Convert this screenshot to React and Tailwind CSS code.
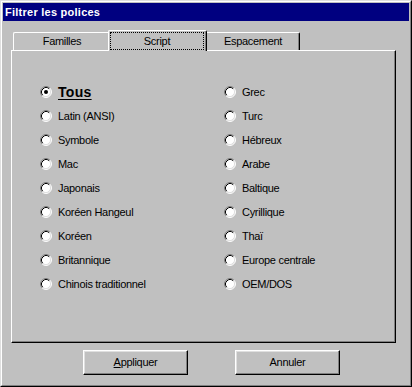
import React from "react";

function Radio({ checked }) {
  return (
    <svg width="12" height="12" viewBox="0 0 12 12" className="shrink-0">
      <circle cx="6" cy="6" r="5" fill="#ffffff" />
      <path d="M2.11 9.89 A5.5 5.5 0 0 1 9.89 2.11" fill="none" stroke="#808080" strokeWidth="1" />
      <path d="M9.89 2.11 A5.5 5.5 0 0 1 2.11 9.89" fill="none" stroke="#ffffff" strokeWidth="1" />
      <path d="M2.82 9.18 A4.5 4.5 0 0 1 9.18 2.82" fill="none" stroke="#000000" strokeWidth="1" />
      <path d="M9.18 2.82 A4.5 4.5 0 0 1 2.82 9.18" fill="none" stroke="#dfdfdf" strokeWidth="1" />
      {checked && <circle cx="6" cy="6" r="2" fill="#000000" />}
    </svg>
  );
}

const left = [
  "Latin (ANSI)",
  "Symbole",
  "Mac",
  "Japonais",
  "Koréen Hangeul",
  "Koréen",
  "Britannique",
  "Chinois traditionnel",
];
const right = [
  "Grec",
  "Turc",
  "Hébreux",
  "Arabe",
  "Baltique",
  "Cyrillique",
  "Thaï",
  "Europe centrale",
  "OEM/DOS",
];

function Row({ label, checked, bold }) {
  return (
    <div className="flex h-[24px] items-center">
      <Radio checked={checked} />
      {bold ? (
        <span className="ml-[6px] text-[14px] font-bold underline underline-offset-2 tracking-[0.3px]">{label}</span>
      ) : (
        <span className="ml-[6px] text-[11px] tracking-[-0.3px]">{label}</span>
      )}
    </div>
  );
}

export default function App() {
  return (
    <div className="w-[412px] h-[387px] bg-[#c0c0c0] border border-t-[#dfdfdf] border-l-[#dfdfdf] border-r-black border-b-black font-['Liberation_Sans',Arial,sans-serif] text-black">
      <div className="w-full h-full border border-t-white border-l-white border-r-[#808080] border-b-[#808080] p-[1px] flex flex-col">
        <div className="h-[18px] bg-[#000080] flex items-center pl-[2px] text-white text-[11px] font-bold tracking-[0.25px]">
          Filtrer les polices
        </div>

        <div className="mt-[9px] ml-[10px] h-[20px] flex items-end">
          <div className="w-[97px] h-[18px] border-t border-l border-white rounded-tl-[2px] rounded-tr-[2px] flex items-center justify-center text-[11px] tracking-[-0.3px]">
            Familles
          </div>
          <div className="relative z-10 -ml-[2px] -mb-[1px] w-[99px] h-[21px] bg-[#c0c0c0] border-t border-l border-white border-r border-r-black rounded-tl-[2px] rounded-tr-[2px] shadow-[inset_-1px_0_#808080] pt-[1px] pl-[1px] pr-[2px] pb-[1px] flex">
            <div className="flex-1 border border-dotted border-black flex items-center justify-center text-[11px] tracking-[-0.3px]">
              Script
            </div>
          </div>
          <div className="-ml-[2px] w-[95px] h-[18px] border-t border-white border-r border-r-black rounded-tr-[2px] shadow-[inset_-1px_0_#808080] flex items-center justify-center pl-[2px] text-[11px] tracking-[-0.3px]">
            Espacement
          </div>
        </div>

        <div className="ml-[8px] w-[385px] h-[293px] border border-t-white border-l-white border-r-black border-b-black shadow-[inset_-1px_-1px_#808080] pt-[29px] pl-[28px] flex">
          <div className="w-[184px] flex flex-col">
            <Row label="Tous" checked bold />
            {left.map((l) => (
              <Row key={l} label={l} />
            ))}
          </div>
          <div className="flex flex-col">
            {right.map((l) => (
              <Row key={l} label={l} />
            ))}
          </div>
        </div>

        <div className="mt-[7px] ml-[80px] flex gap-[47px]">
          <button className="w-[105px] h-[25px] bg-[#c0c0c0] border border-t-white border-l-white border-r-black border-b-black shadow-[inset_-1px_-1px_#808080,inset_1px_1px_#dfdfdf] text-[11px] tracking-[-0.3px] flex items-center justify-center">
            <span><span className="underline">A</span>ppliquer</span>
          </button>
          <button className="w-[105px] h-[25px] bg-[#c0c0c0] border border-t-white border-l-white border-r-black border-b-black shadow-[inset_-1px_-1px_#808080,inset_1px_1px_#dfdfdf] text-[11px] tracking-[-0.3px] flex items-center justify-center">
            Annuler
          </button>
        </div>
      </div>
    </div>
  );
}
